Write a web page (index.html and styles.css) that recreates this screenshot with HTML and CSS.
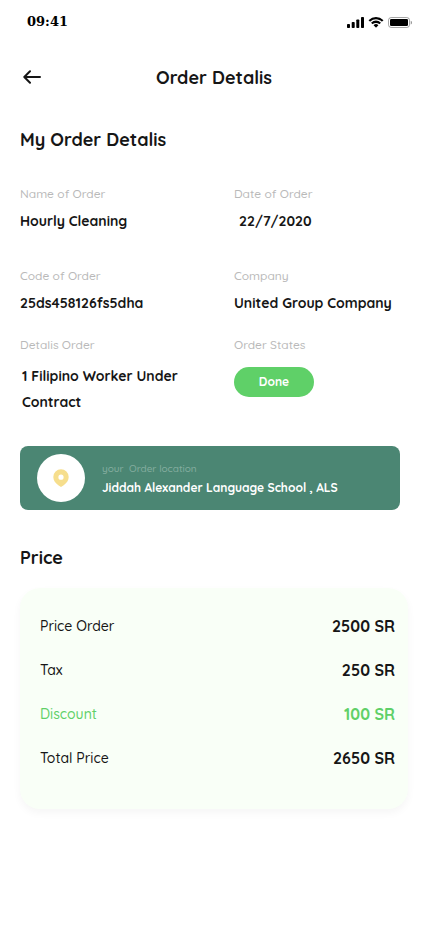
FILE: index.html
```html
<!DOCTYPE html>
<html lang="en">
<head>
<meta charset="utf-8">
<meta name="viewport" content="width=device-width, initial-scale=1">
<title>Order Detalis</title>
<link rel="stylesheet" href="styles.css">
</head>
<body>
<div class="status-bar">
  <span class="time">09:41</span>
  <div class="status-icons">
    <svg width="18" height="11" viewBox="0 0 18 11"><rect x="1" y="7" width="3" height="4" rx=".8"/><rect x="5.700" y="5" width="3" height="6" rx=".8"/><rect x="10.300" y="2.500" width="3" height="8.500" rx=".8"/><rect x="15" y="0" width="3" height="11" rx=".8"/></svg>
    <svg width="16" height="11" viewBox="0 0 16 11"><path d="M8 2.3c2.2 0 4.200.9 5.700 2.300.1.1.3.1.4 0l1.100-1.100a.3.3 0 0 0 0-.5A10.400 10.400 0 0 0 .8 3a.3.3 0 0 0 0 .5l1.100 1.100c.1.1.3.1.4 0A8.300 8.300 0 0 1 8 2.300zm0 3.600c1.200 0 2.300.4 3.200 1.200.1.1.3.1.4 0l1.100-1.100a.3.3 0 0 0 0-.5 6.800 6.800 0 0 0-9.400 0 .3.3 0 0 0 0 .5l1.100 1.100c.1.1.3.1.4 0A4.700 4.700 0 0 1 8 5.900zm2.200 2.500a.3.3 0 0 0 0-.4 3.300 3.300 0 0 0-4.400 0 .3.3 0 0 0 0 .4l2 2c.1.1.3.1.4 0z"/></svg>
    <svg width="24" height="11" viewBox="0 0 24 11"><rect x=".5" y=".5" width="21" height="10" rx="2.700" fill="none" stroke="#000" stroke-opacity=".35"/><rect x="2" y="2" width="18" height="7" rx="1.300"/><path d="M22.700 3.700v3.800a2 2 0 0 0 0-3.800z" opacity=".4"/></svg>
  </div>
</div>
<header class="page-header">
  <button class="back" type="button" aria-label="Back">
    <svg width="18" height="14" viewBox="0 0 18 14"><path d="M17 7H1.500M7 1.300L1.300 7 7 12.700" fill="none" stroke="currentColor" stroke-width="2" stroke-linecap="round" stroke-linejoin="round"/></svg>
  </button>
  <h1>Order Detalis</h1>
</header>
<main>
  <h2>My Order Detalis</h2>
  <dl class="details">
    <div class="field"><dt>Name of Order</dt><dd>Hourly Cleaning</dd></div>
    <div class="field"><dt>Date of Order</dt><dd class="date">22/7/2020</dd></div>
    <div class="field"><dt>Code of Order</dt><dd>25ds458126fs5dha</dd></div>
    <div class="field"><dt>Company</dt><dd>United Group Company</dd></div>
    <div class="field last"><dt>Detalis Order</dt><dd class="summary">1 Filipino Worker Under Contract</dd></div>
    <div class="field last"><dt>Order States</dt><dd><span class="badge">Done</span></dd></div>
  </dl>
  <section class="location">
    <div class="pin"><svg width="16" height="18" viewBox="0 0 16 18"><path fill="#f6de8d" fill-rule="evenodd" d="M8 .2a7.700 7.700 0 0 1 7.700 7.700c0 3.500-2.300 6.100-5 8.300L8 18l-2.700-1.800C2.600 14 .3 11.400.3 7.900A7.700 7.700 0 0 1 8 .2zm0 5.400a2.600 2.600 0 1 0 0 5.200 2.600 2.600 0 0 0 0-5.200z"/></svg></div>
    <div class="address">
      <p class="hint">your&nbsp; Order location</p>
      <p class="place">Jiddah Alexander Language School , ALS</p>
    </div>
  </section>
  <h2>Price</h2>
  <dl class="price-card">
    <div class="price-row"><dt>Price Order</dt><dd>2500 SR</dd></div>
    <div class="price-row"><dt>Tax</dt><dd>250 SR</dd></div>
    <div class="price-row discount"><dt>Discount</dt><dd>100 SR</dd></div>
    <div class="price-row"><dt>Total Price</dt><dd>2650 SR</dd></div>
  </dl>
</main>
</body>
</html>
```
FILE: styles.css
```css
* {
  box-sizing: border-box;
  margin: 0;
  padding: 0;
}

body {
  background: #fff;
  color: #161616;
  font-family: Quicksand, Lato, sans-serif;
}

.status-bar {
  display: flex;
  align-items: center;
  justify-content: space-between;
  height: 44px;
  padding: 0 16px 0 27px;
}

.time {
  color: #000;
  font: bold 13px/20px "DejaVu Serif", serif;
}

.status-icons {
  display: flex;
  gap: 4px;
}

.status-icons svg {
  display: block;
}

.page-header {
  display: grid;
  grid-template-columns: 21px 1fr 21px;
  align-items: start;
  padding: 21px 20px 0;
}

.back {
  display: flex;
  align-items: center;
  justify-content: flex-end;
  height: 24px;
  border: 0;
  background: none;
  color: #161616;
}

h1,
h2 {
  font-size: 18px;
  font-weight: 700;
  line-height: 26px;
}

h1 {
  text-align: center;
}

main {
  padding: 36px 20px 24px;
}

.details {
  display: grid;
  grid-template-columns: 214px 1fr;
  row-gap: 32px;
  margin-top: 31px;
}

.field dt {
  color: #b9b9b9;
  font-size: 12px;
  font-weight: 500;
  line-height: 20px;
}

.field dd {
  margin-top: 4px;
  font-size: 14px;
  font-weight: 700;
  line-height: 26px;
}

.field .date {
  padding-left: 5px;
}

.last {
  margin-top: -13px;
}

.field.last dd {
  max-width: 180px;
  margin-top: 8px;
}

.field .summary {
  padding-left: 2px;
}

.badge {
  display: block;
  width: 80px;
  margin-top: 12px;
  border-radius: 15px;
  background: #5fd068;
  color: #fff;
  font-size: 12px;
  line-height: 30px;
  text-align: center;
}

.location {
  display: flex;
  align-items: center;
  gap: 17px;
  margin: 31px 8px 35px 0;
  padding: 8px 17px;
  border-radius: 8px;
  background: #4b8673;
}

.pin {
  display: flex;
  flex: none;
  align-items: center;
  justify-content: center;
  width: 48px;
  height: 48px;
  border-radius: 50%;
  background: #fff;
}

.address {
  padding-top: 2px;
}

.hint {
  color: #84ad9f;
  font-size: 10px;
  font-weight: 500;
  line-height: 18px;
}

.place {
  color: #fff;
  font-size: 12px;
  font-weight: 700;
  line-height: 20px;
}

.price-card {
  margin-top: 17px;
  padding: 16px 13px 29px 20px;
  border-radius: 20px;
  background: #f9fff7;
  box-shadow: 0 4px 8px rgb(0 0 0 / 4%);
}

.price-row {
  display: flex;
  align-items: center;
  justify-content: space-between;
  height: 44px;
}

.price-row dt {
  font-size: 14px;
  font-weight: 500;
}

.price-row dd {
  font-size: 16px;
  font-weight: 700;
}

.discount {
  color: #5fd068;
}
```
